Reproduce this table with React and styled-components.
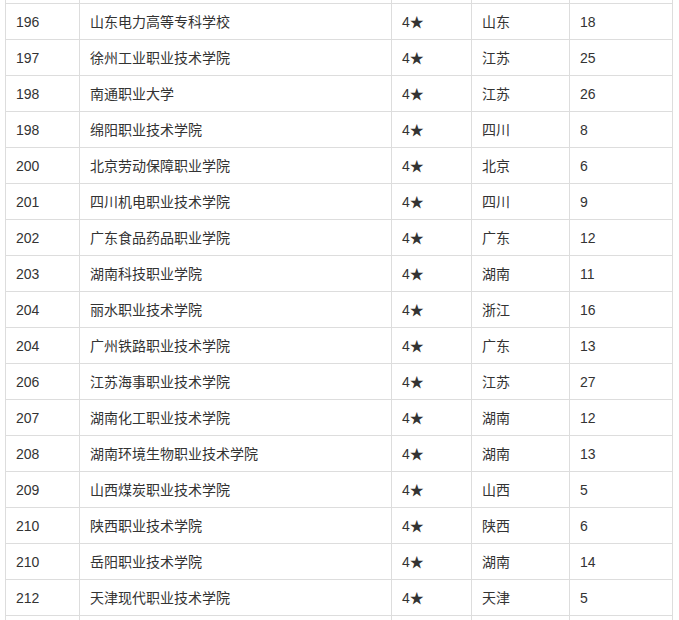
import React from 'react';
import styled, { createGlobalStyle } from 'styled-components';

const GlobalStyle = createGlobalStyle`
  html, body {
    margin: 0;
    padding: 0;
    background: #fff;
  }
  body {
    font-family: "Liberation Sans", "Noto Sans CJK SC", sans-serif;
    color: #333;
    overflow: hidden;
  }
`;

const Page = styled.div`
  width: 679px;
  height: 620px;
  overflow: hidden;
  padding-left: 5px;
  box-sizing: border-box;
`;

const Table = styled.table`
  border-collapse: collapse;
  table-layout: fixed;
  width: 668px;
  font-size: 14px;
`;

const Cell = styled.td`
  border: 1px solid #ddd;
  padding: 0 10px;
  height: 35px;
  line-height: 20px;
  vertical-align: middle;
  white-space: nowrap;
  overflow: hidden;
  color: #333;
`;

const SpacerCell = styled.td`
  border-left: 1px solid #ddd;
  border-right: 1px solid #ddd;
  border-top: none;
  padding: 0;
  height: 3px;
`;

const cols = [74, 312, 80, 98, 103];

const rows = [
  ['196', '山东电力高等专科学校', '4★', '山东', '18'],
  ['197', '徐州工业职业技术学院', '4★', '江苏', '25'],
  ['198', '南通职业大学', '4★', '江苏', '26'],
  ['198', '绵阳职业技术学院', '4★', '四川', '8'],
  ['200', '北京劳动保障职业学院', '4★', '北京', '6'],
  ['201', '四川机电职业技术学院', '4★', '四川', '9'],
  ['202', '广东食品药品职业学院', '4★', '广东', '12'],
  ['203', '湖南科技职业学院', '4★', '湖南', '11'],
  ['204', '丽水职业技术学院', '4★', '浙江', '16'],
  ['204', '广州铁路职业技术学院', '4★', '广东', '13'],
  ['206', '江苏海事职业技术学院', '4★', '江苏', '27'],
  ['207', '湖南化工职业技术学院', '4★', '湖南', '12'],
  ['208', '湖南环境生物职业技术学院', '4★', '湖南', '13'],
  ['209', '山西煤炭职业技术学院', '4★', '山西', '5'],
  ['210', '陕西职业技术学院', '4★', '陕西', '6'],
  ['210', '岳阳职业技术学院', '4★', '湖南', '14'],
  ['212', '天津现代职业技术学院', '4★', '天津', '5'],
  ['', '', '', '', ''],
];

const App = () => (
  <Page>
    <GlobalStyle />
    <Table>
      <colgroup>
        {cols.map((w, i) => (
          <col key={i} style={{ width: w }} />
        ))}
      </colgroup>
      <tbody>
        <tr>
          {cols.map((_, i) => (
            <SpacerCell key={i} />
          ))}
        </tr>
        {rows.map((r, i) => (
          <tr key={i}>
            {r.map((v, j) => (
              <Cell key={j}>{v}</Cell>
            ))}
          </tr>
        ))}
      </tbody>
    </Table>
  </Page>
);

export default App;
